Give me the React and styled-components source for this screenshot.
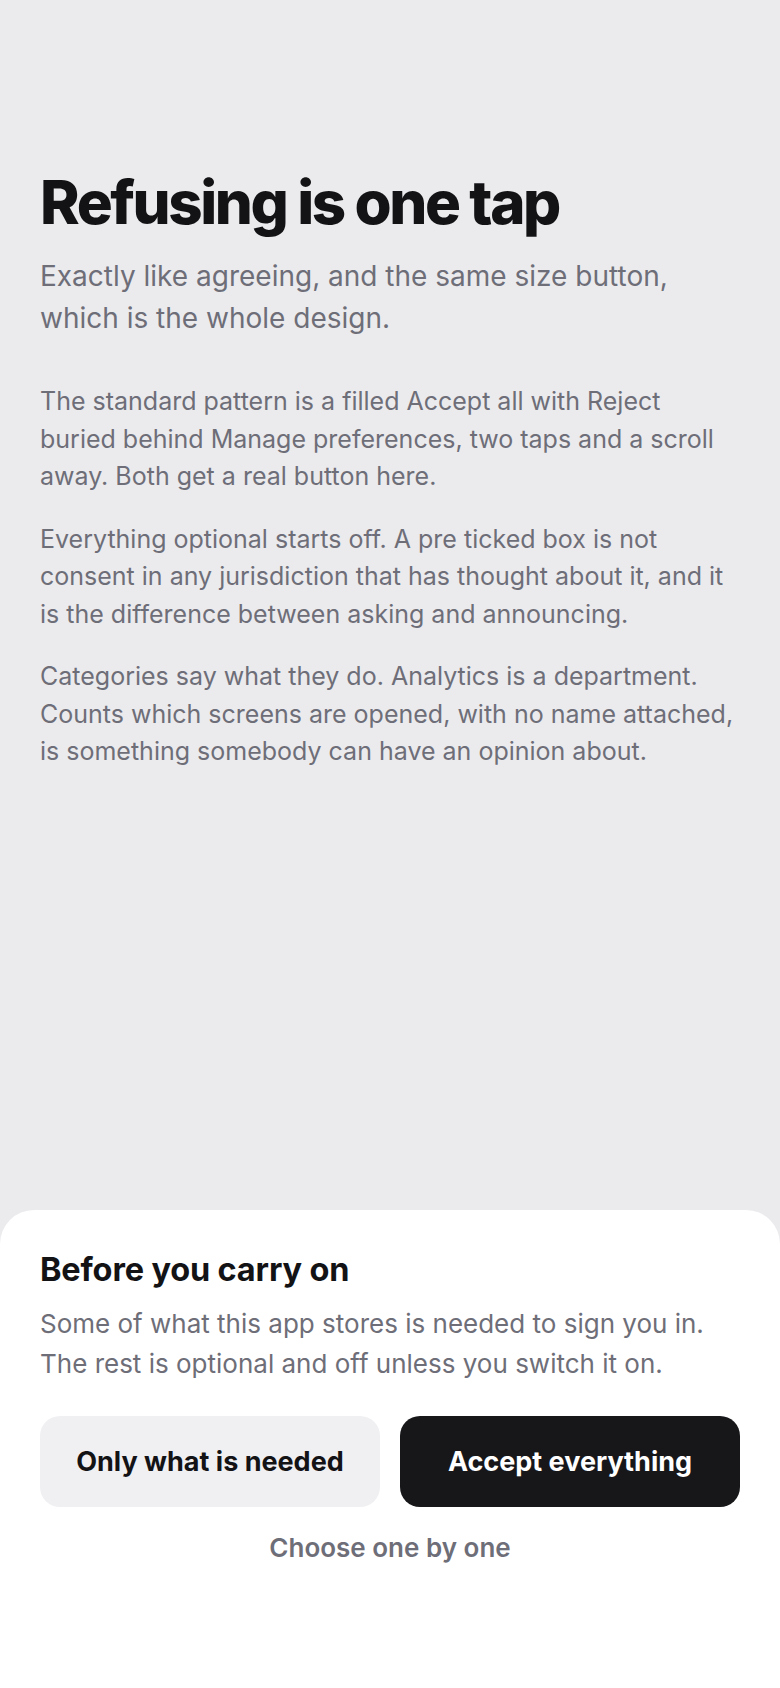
import React from 'react';
import styled, { createGlobalStyle } from 'styled-components';

const GlobalStyle = createGlobalStyle`
  html, body {
    margin: 0;
    padding: 0;
    background: #ebebee;
  }
  body {
    font-family: Inter, "Noto Sans", "Liberation Sans", sans-serif;
    -webkit-font-smoothing: antialiased;
  }
`;

const Screen = styled.div`
  min-height: 1688px;
  display: flex;
  flex-direction: column;
  background: #ebebee;
`;

const Main = styled.main`
  flex: 1;
  padding: 169px 40px 0;
`;

const Title = styled.h1`
  margin: 0;
  font-size: 60px;
  line-height: 66px;
  font-weight: 800;
  letter-spacing: -0.04em;
  color: #131316;
`;

const Lead = styled.p`
  margin: 20px 0 44px;
  font-size: 28px;
  line-height: 42px;
  color: #6e6e78;
`;

const Body = styled.p`
  margin: 0 0 25px;
  font-size: 25px;
  line-height: 37.5px;
  color: #6e6e78;
`;

const Sheet = styled.section`
  background: #ffffff;
  border-radius: 34px 34px 0 0;
  padding: 41px 40px 0;
  height: 478px;
  box-sizing: border-box;
`;

const SheetTitle = styled.h2`
  margin: 0;
  font-size: 32.5px;
  line-height: 38px;
  font-weight: 700;
  letter-spacing: -0.005em;
  color: #131316;
`;

const SheetText = styled.p`
  margin: 15px 0 32px;
  font-size: 26px;
  line-height: 40px;
  color: #6e6e78;
`;

const Actions = styled.div`
  display: grid;
  grid-template-columns: 1fr 1fr;
  gap: 20px;
`;

const Action = styled.button`
  height: 91px;
  border: 0;
  border-radius: 20px;
  font-family: inherit;
  font-size: 27px;
  font-weight: 700;
  background: ${p => (p.$primary ? '#17171a' : '#f0f0f3')};
  color: ${p => (p.$primary ? '#ffffff' : '#131316')};
  cursor: pointer;
`;

const LinkButton = styled.button`
  display: block;
  margin: 25px auto 0;
  padding: 0;
  border: 0;
  background: none;
  font-family: inherit;
  font-size: 26px;
  line-height: 32px;
  font-weight: 600;
  color: #6e6e78;
  cursor: pointer;
`;

export default function App() {
  return (
    <>
      <GlobalStyle />
      <Screen>
        <Main>
          <Title>Refusing is one tap</Title>
          <Lead>Exactly like agreeing, and the same size button, which is the whole design.</Lead>
          <Body>
            The standard pattern is a filled Accept all with Reject buried behind Manage
            preferences, two taps and a scroll away. Both get a real button here.
          </Body>
          <Body>
            Everything optional starts off. A pre ticked box is not consent in any jurisdiction
            that has thought about it, and it is the difference between asking and announcing.
          </Body>
          <Body>
            Categories say what they do. Analytics is a department. Counts which screens are
            opened, with no name attached, is something somebody can have an opinion about.
          </Body>
        </Main>
        <Sheet>
          <SheetTitle>Before you carry on</SheetTitle>
          <SheetText>
            Some of what this app stores is needed to sign you in. The rest is optional and off
            unless you switch it on.
          </SheetText>
          <Actions>
            <Action>Only what is needed</Action>
            <Action $primary>Accept everything</Action>
          </Actions>
          <LinkButton>Choose one by one</LinkButton>
        </Sheet>
      </Screen>
    </>
  );
}
